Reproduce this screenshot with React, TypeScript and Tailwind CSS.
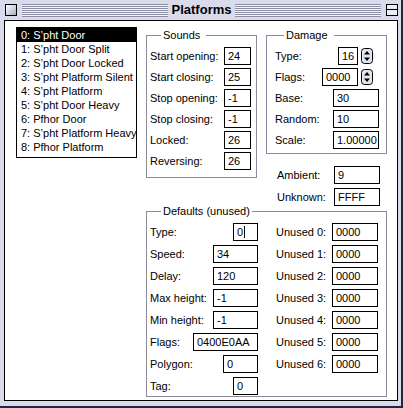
import React from 'react'

const items = [
  '0: S’pht Door',
  '1: S’pht Door Split',
  '2: S’pht Door Locked',
  '3: S’pht Platform Silent',
  '4: S’pht Platform',
  '5: S’pht Door Heavy',
  '6: Pfhor Door',
  '7: S’pht Platform Heavy',
  '8: Pfhor Platform',
]

function Box({ v, w, caret }: { v: string; w: string; caret?: boolean }) {
  return (
    <div className={`h-[18px] ${w} shrink-0 overflow-hidden whitespace-nowrap border border-black bg-white pl-[3px] leading-[16px]`}>
      {v}
      {caret && <span className="ml-px inline-block h-[12px] w-px bg-black align-[-2px]" />}
    </div>
  )
}

function Stepper() {
  return (
    <svg width="12" height="16" viewBox="0 0 12 16" className="shrink-0">
      <rect x="0.5" y="0.5" width="11" height="15" rx="3" fill="#e4e4ee" stroke="#000" />
      <path d="M6 3 L9 6.5 L3 6.5 Z" fill="#000" />
      <path d="M6 13 L9 9.5 L3 9.5 Z" fill="#000" />
    </svg>
  )
}

function Row({ label, children }: { label: string; children: React.ReactNode }) {
  return (
    <div className="flex h-[18px] items-center justify-between">
      <span className="whitespace-nowrap">{label}</span>
      {children}
    </div>
  )
}

function Group({ title, className, legend, children }: { title: string; className: string; legend: string; children: React.ReactNode }) {
  return (
    <div className={`relative shrink-0 border border-[#8c8c9c] ${className}`}>
      <span className={`absolute -top-[8px] bg-white leading-[14px] ${legend}`}>{title}</span>
      {children}
    </div>
  )
}

export default function App() {
  return (
    <div className="h-[408px] w-[403px] border-b-2 border-r-2 border-b-[#24243a] border-r-[#24243a] bg-[#d9dbea] font-['Liberation_Sans',Arial,sans-serif] text-[11px] text-black">
      {/* title bar */}
      <div className="flex h-[20px] items-center pl-[5px] pr-[3px]">
        <div className="h-[12px] w-[12px] shrink-0 border border-black bg-[linear-gradient(135deg,#ffffff,#a9abbd)]" />
        <div className="ml-[5px] h-[13px] flex-1 bg-[repeating-linear-gradient(to_bottom,#8b8da3_0px,#8b8da3_1px,#f4f4fa_1px,#f4f4fa_2px)]" />
        <div className="px-[4px] text-[13px] font-bold leading-[16px]">Platforms</div>
        <div className="h-[13px] flex-1 bg-[repeating-linear-gradient(to_bottom,#8b8da3_0px,#8b8da3_1px,#f4f4fa_1px,#f4f4fa_2px)]" />
        <div className="ml-[5px] flex h-[12px] w-[12px] shrink-0 flex-col border border-black bg-[#ececf4]">
          <div className="h-[5px] border-b border-black" />
        </div>
      </div>

      {/* content */}
      <div className="ml-[4px] flex h-[381px] w-[394px] border border-black bg-white">
        <div className="ml-[11px] mt-[6px] h-[131px] w-[121px] shrink-0 border border-black">
          {items.map((t, i) => (
            <div key={t} className={`h-[14px] whitespace-nowrap pl-[4px] leading-[15px] ${i === 0 ? 'bg-black text-white' : ''}`}>
              {t}
            </div>
          ))}
        </div>

        <div className="ml-[9px] mt-[14px] flex w-[241px] flex-col">
          <div className="flex items-start gap-[9px]">
            <Group title="Sounds" legend="left-[14px] pl-[2px] pr-[6px]" className="h-[143px] w-[111px] pl-[3px] pr-[5px] pt-[11px]">
              <div className="flex flex-col gap-[3px]">
                <Row label="Start opening:"><Box v="24" w="w-[27px]" /></Row>
                <Row label="Start closing:"><Box v="25" w="w-[27px]" /></Row>
                <Row label="Stop opening:"><Box v="-1" w="w-[27px]" /></Row>
                <Row label="Stop closing:"><Box v="-1" w="w-[27px]" /></Row>
                <Row label="Locked:"><Box v="26" w="w-[27px]" /></Row>
                <Row label="Reversing:"><Box v="26" w="w-[27px]" /></Row>
              </div>
            </Group>

            <div className="flex w-[121px] flex-col">
              <Group title="Damage" legend="left-[17px] pl-[2px] pr-[6px]" className="h-[119px] pl-[8px] pr-[7px] pt-[11px]">
                <div className="flex flex-col gap-[3px]">
                  <Row label="Type:">
                    <div className="mr-[6px] flex items-center gap-[3px]"><Box v="16" w="w-[20px]" /><Stepper /></div>
                  </Row>
                  <Row label="Flags:">
                    <div className="mr-[6px] flex items-center gap-[3px]"><Box v="0000" w="w-[36px]" /><Stepper /></div>
                  </Row>
                  <Row label="Base:"><Box v="30" w="w-[46px]" /></Row>
                  <Row label="Random:"><Box v="10" w="w-[46px]" /></Row>
                  <Row label="Scale:"><Box v="1.00000" w="w-[46px]" /></Row>
                </div>
              </Group>
              <div className="mt-[12px] flex flex-col gap-[4px] pl-[11px] pr-[7px]">
                <Row label="Ambient:"><Box v="9" w="w-[46px]" /></Row>
                <Row label="Unknown:"><Box v="FFFF" w="w-[46px]" /></Row>
              </div>
            </div>
          </div>

          <Group title="Defaults (unused)" legend="left-[14px] pl-[2px] pr-[2px]" className="mt-[5px] flex h-[186px] pt-[11px]">
            <div className="flex w-[111px] flex-col gap-[4px] pl-[3px]">
              <Row label="Type:"><Box v="0" w="w-[25px]" caret /></Row>
              <Row label="Speed:"><Box v="34" w="w-[45px]" /></Row>
              <Row label="Delay:"><Box v="120" w="w-[45px]" /></Row>
              <Row label="Max height:"><Box v="-1" w="w-[45px]" /></Row>
              <Row label="Min height:"><Box v="-1" w="w-[45px]" /></Row>
              <Row label="Flags:"><Box v="0400E0AA" w="w-[65px]" /></Row>
              <Row label="Polygon:"><Box v="0" w="w-[35px]" /></Row>
              <Row label="Tag:"><Box v="0" w="w-[25px]" /></Row>
            </div>
            <div className="ml-[18px] flex w-[102px] flex-col gap-[4px]">
              {[0, 1, 2, 3, 4, 5, 6].map(n => (
                <Row key={n} label={`Unused ${n}:`}><Box v="0000" w="w-[46px]" /></Row>
              ))}
            </div>
          </Group>
        </div>
      </div>
    </div>
  )
}
